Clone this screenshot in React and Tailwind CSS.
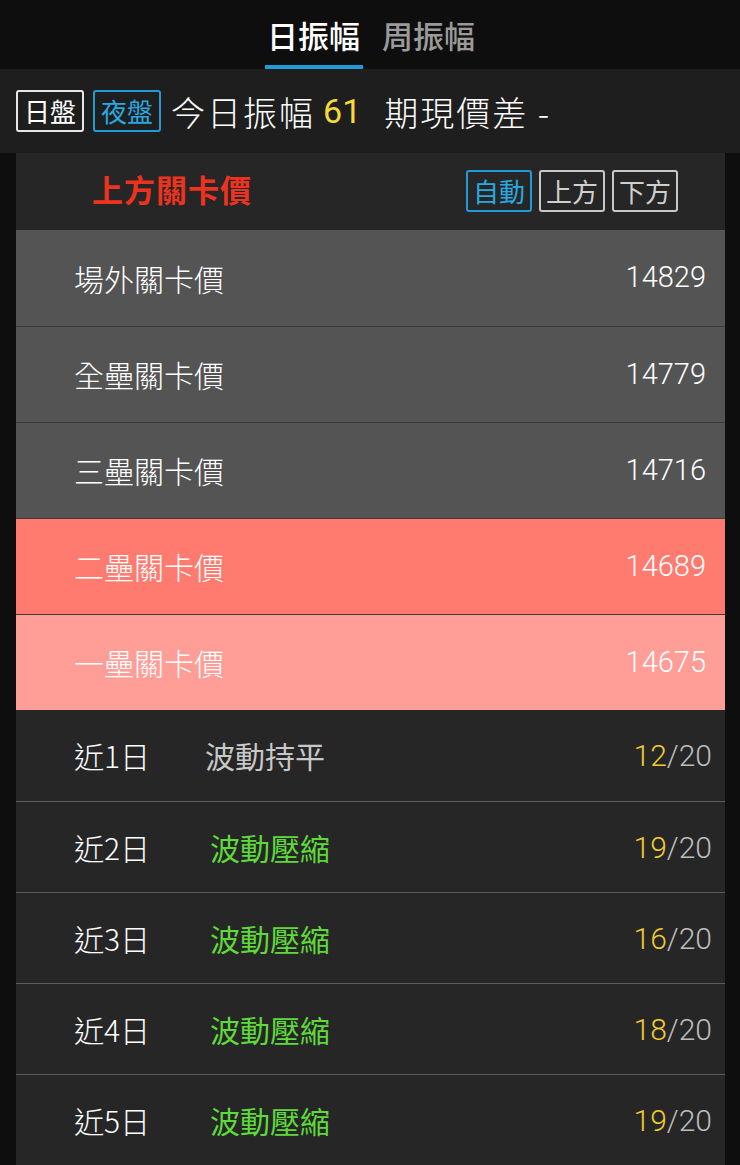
const cjk = { fontFamily: '"Noto Sans CJK TC", "Noto Sans", sans-serif' }
const num = { fontFamily: 'Roboto, "Liberation Sans", sans-serif' }

const levels = [
    { name: '場外關卡價', value: '14829', bg: 'bg-[#545454]' },
    { name: '全壘關卡價', value: '14779', bg: 'bg-[#545454]' },
    { name: '三壘關卡價', value: '14716', bg: 'bg-[#545454]' },
    { name: '二壘關卡價', value: '14689', bg: 'bg-[#ff7b6f]' },
    { name: '一壘關卡價', value: '14675', bg: 'bg-[#ff9d97]' },
]

const days = [
    { label: '近1日', status: '波動持平', color: 'text-[#c8c8c8]', pad: 'w-[131px]', hit: '12' },
    { label: '近2日', status: '波動壓縮', color: 'text-[#5fd93a]', pad: 'w-[136px]', hit: '19' },
    { label: '近3日', status: '波動壓縮', color: 'text-[#5fd93a]', pad: 'w-[136px]', hit: '16' },
    { label: '近4日', status: '波動壓縮', color: 'text-[#5fd93a]', pad: 'w-[136px]', hit: '18' },
    { label: '近5日', status: '波動壓縮', color: 'text-[#5fd93a]', pad: 'w-[136px]', hit: '19' },
]

function App() {
    return (
        <div className="w-[740px] h-[1165px] bg-[#0e0e0e] overflow-hidden" style={cjk}>
            {/* tabs */}
            <div className="h-[69px] flex justify-center items-end gap-[18px] pr-[2px]">
                <div className="flex flex-col items-center">
                    <span className="text-[31px] font-medium text-white leading-none px-[4px] pb-[15px]">日振幅</span>
                    <div className="h-[4px] w-[98px] bg-[#1f9bd7]"></div>
                </div>
                <span className="text-[31px] font-medium text-[#9a9a9a] leading-none pb-[19px]">周振幅</span>
            </div>

            {/* session bar */}
            <div className="h-[84px] bg-[#1e1e1e] flex items-center pl-[16px] text-white">
                <span className="border-2 border-[#e6e6e6] rounded-[3px] text-[26px] leading-none px-[6px] py-[6px]">日盤</span>
                <span className="ml-[9px] border-2 border-[#1f9bd7] rounded-[3px] text-[26px] leading-none px-[6px] py-[6px] text-[#29a8e0]">夜盤</span>
                <span className="ml-[10px] text-[34px] font-light tracking-[2px]">今日振幅</span>
                <span className="ml-[8px] text-[34px] text-[#f5d83a]" style={num}>61</span>
                <span className="ml-[23px] text-[34px] font-light tracking-[2px]">期現價差 -</span>
            </div>

            {/* panel */}
            <div className="ml-[16px] w-[709px] bg-[#262626]">
                <div className="h-[77px] flex items-center justify-between pl-[76px] pr-[47px]">
                    <span className="text-[31px] font-bold text-[#ec3320] tracking-[1px] pb-[4px]">上方關卡價</span>
                    <div className="flex gap-[7px] text-[26px] leading-none pb-[2px]">
                        <span className="border-2 border-[#1f9bd7] rounded-[3px] text-[#2aa9e0] px-[5px] py-[6px]">自動</span>
                        <span className="border-2 border-[#c8c8c8] rounded-[3px] text-[#cfcfcf] px-[5px] py-[6px]">上方</span>
                        <span className="border-2 border-[#c8c8c8] rounded-[3px] text-[#cfcfcf] px-[5px] py-[6px]">下方</span>
                    </div>
                </div>

                {levels.map((l, i) => (
                    <div
                        key={l.name}
                        className={`${l.bg} h-[96px] flex items-center justify-between pl-[58px] pr-[19px] ${i > 0 ? 'border-t border-[#3b3b3b]' : ''}`}
                    >
                        <span className="text-[30px] text-white font-light">{l.name}</span>
                        <span className="text-[29px] text-white font-light" style={num}>{l.value}</span>
                    </div>
                ))}

                {days.map((d, i) => (
                    <div
                        key={d.label}
                        className={`h-[91px] flex items-center pl-[58px] pr-[13px] ${i > 0 ? 'border-t border-[#5c5c5c]' : ''}`}
                    >
                        <span className={`${d.pad} text-[30px] text-white font-light`}>{d.label}</span>
                        <span className={`text-[30px] ${d.color}`}>{d.status}</span>
                        <span className="ml-auto text-[30px] font-light" style={num}>
                            <span className="text-[#f2cb33]">{d.hit}</span>
                            <span className="text-[#bdbdbd]">/20</span>
                        </span>
                    </div>
                ))}
            </div>
        </div>
    )
}

export default App
